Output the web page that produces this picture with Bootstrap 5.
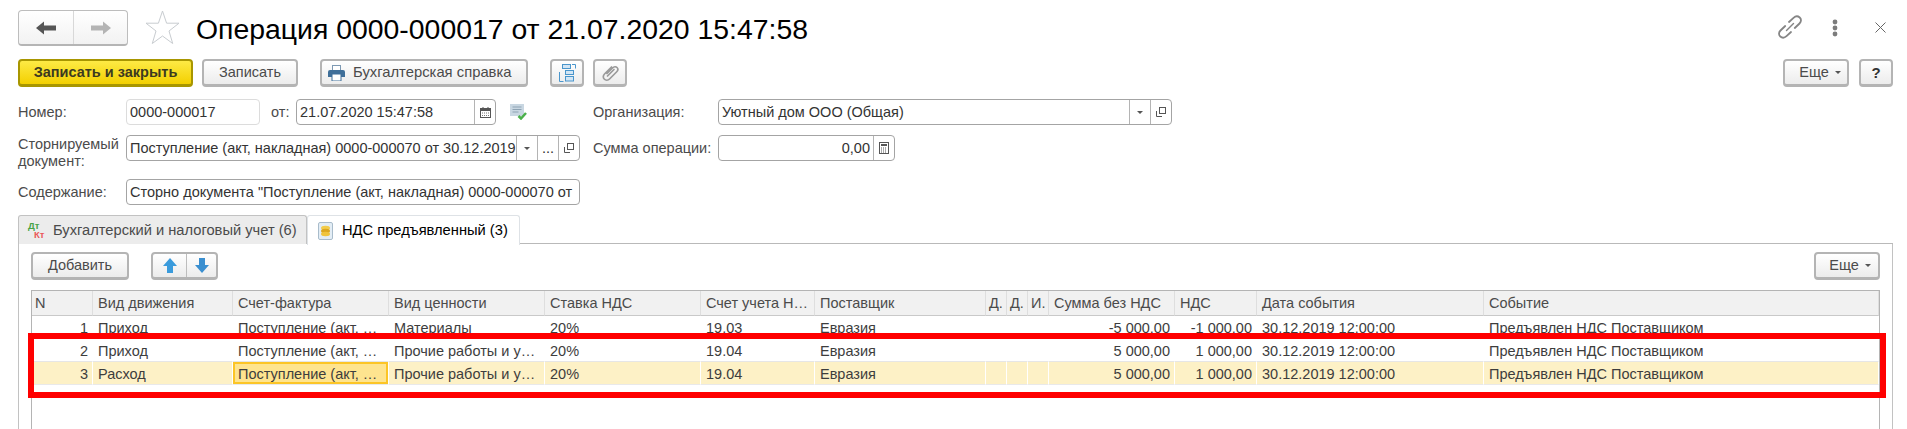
<!DOCTYPE html>
<html lang="ru"><head><meta charset="utf-8"><title>Операция</title>
<link rel="stylesheet" href="https://cdn.jsdelivr.net/npm/bootstrap@5.3.0/dist/css/bootstrap.min.css">
<script src="https://cdn.jsdelivr.net/npm/bootstrap@5.3.0/dist/js/bootstrap.bundle.min.js"></script>
<style>
html,body{height:429px;overflow:hidden;background:#fff}
body{font-family:"Liberation Sans",Arial,sans-serif;font-size:14.5px;color:#4b4b4b;line-height:17px}
.page{position:relative;height:429px;padding:10px 14px 0 18px;overflow:hidden}
.head{height:36px}
.navgroup{width:110px;height:36px;border:1px solid #bdbdbd;border-bottom:2px solid #b5b5b5;border-radius:4px;background:linear-gradient(#fff,#f2f2f2)}
.navgroup>span{display:flex;align-items:center;justify-content:center}
.navgroup>span:first-child{width:55px;border-right:1px solid #d8d8d8}
.navgroup>span:last-child{flex:1}
.star{margin:0 16px 0 17px}
.title{font-size:28.4px;color:#000;line-height:36px;margin-top:1px}
.hicons{width:107px;height:36px;margin-left:auto;position:relative}
.hlink{left:-8px;top:5px}.hdots{left:46px;top:9px}.hx{left:89px;top:12px}
.toolbar{margin-top:13px;height:28px}
.ubtn{--bs-btn-padding-y:0;--bs-btn-padding-x:0;--bs-btn-font-size:14.5px;--bs-btn-line-height:17px;--bs-btn-color:#4b4b4b;--bs-btn-hover-color:#4b4b4b;height:28px;border:2px solid #b4b4b4;border-bottom-width:3px;border-radius:4px;background:linear-gradient(#fff,#ececec);color:#4b4b4b;display:inline-flex;align-items:center;justify-content:center;font-family:inherit}
.ubtn.yl{width:175px;background:linear-gradient(#fdea45,#f3d000);border-color:#a89600;color:#3c3a20;font-weight:700}
.w-zap{width:96px;margin-left:9px}
.ubtn.w-spr{width:208px;margin-left:22px;gap:8px;justify-content:flex-start;padding-left:6px;font-size:14.8px}
.w-ic1{width:34px;margin-left:22px}
.w-ic2{width:34px;margin-left:9px}
.w-more{width:66px;margin-left:auto;gap:6px;padding-left:8px}
.w-q{width:34px;margin-left:10px;font-weight:700;font-size:15px;color:#333}
.caret{width:0;height:0;border:3px solid transparent;border-top:3px solid #555;border-bottom:0}
.frow{display:flex;align-items:flex-start}
.r1{margin-top:12px}.r2{margin-top:10px;height:34px}.r3{margin-top:10px}
.lab{line-height:26px}
.l0{width:108px}
.l2{line-height:17px;margin-top:1px}
.fld{display:flex;height:26px;border:1px solid #a4a4a4;border-radius:4px;background:#fff;color:#333;line-height:24px;padding:0;font-size:14.5px;overflow:hidden}
.fld .val{flex:1;min-width:0;padding:0 3px;white-space:nowrap;overflow:hidden}
.fld .ab{border-left:1px solid #b4b4b4;display:flex;align-items:center;justify-content:center;flex:none;width:21px}
.num{width:134px;border-color:#dcdcdc}
.ot{margin-left:11px;width:25px}
.dt{width:200px}
.note{margin:5px 66px 0 14px}
.lorg{width:125px}
.forg{width:454px}
.flong{width:454px}
.fsum{width:177px;margin-left:0}
.gap13{margin-left:13px}
.r2note{width:125px}
.tabsbar{margin-top:10px;height:29px;border-bottom:1px solid #b9b9b9;--bs-nav-tabs-border-width:0}
.tabsbar .nav-link{height:29px;margin:0;padding:0;border:1px solid #c2c2c2;border-bottom:0;border-radius:3px 3px 0 0;display:flex;align-items:center;color:#4b4b4b;background:#ececec;font-size:14.7px}
.tab1{width:289px;padding-left:9px!important;gap:6px}
.tab2{width:213px;padding-left:10px!important;gap:9px;background:#fff!important;height:30px!important;position:relative;z-index:1}
.dk{display:inline-block;width:19px;height:20px;position:relative;font-size:9.5px;line-height:9px;font-weight:700}
.dk i{font-style:normal;position:absolute}
.dk .d{left:0;top:1px;color:#47a447}.dk .k{left:6px;top:10px;color:#ea5a5a}
.panel{height:185px;border-left:1px solid #c2c2c2;border-right:1px solid #c2c2c2;padding:8px 12px 0 12px}
.ptb{height:28px}
.w-add{width:98px}
.agroup{width:67px;margin-left:22px;padding:0}
.agroup>span{display:flex;align-items:center;justify-content:center;height:100%}
.agroup>span:first-child{width:34px;border-right:1px solid #bdbdbd}
.agroup>span:last-child{flex:1}
.w-more2{width:66px;margin-left:auto;gap:6px;padding-left:6px}
.gridbox{margin-top:10px;height:150px;border:1px solid #b4b4b4;border-bottom:0;border-width:1px 1px 0 1px;overflow:hidden}
.table.utable{table-layout:fixed;width:1847px;margin:0;border-collapse:separate;border-spacing:0;--bs-table-bg:transparent;--bs-table-color:#3d3d3d;color:#3d3d3d}
.table.utable>*>*>*{padding:0 0 0 5px;font-weight:400;font-size:14.5px;white-space:nowrap;overflow:hidden;box-sizing:border-box;height:23px;border-top:0;border-left:0;box-shadow:none}
.table.utable>thead>tr>th{height:25px;line-height:23px;background:#f1f1f1;border-bottom:1px solid #c9c9c9;border-right:1px solid #dedede;color:#4b4b4b}
.table.utable>thead>tr>th.tiny{padding-left:3px}
.table.utable>thead>tr>th.nn{padding-left:3px}
.table.utable>tbody>tr>td{line-height:20px;padding-top:2px;vertical-align:top;border-bottom:1px solid #e6e6e6;border-right:1px solid #fff}
.table.utable>tbody>tr>td.rt{text-align:right;padding:2px 4px 0 0}
.table.utable>tbody>tr.cur>td{background:#fdf1c6;border-bottom-color:#e9e9e9}
.table.utable>tbody>tr.cur>td.sel{background:#fee48f;box-shadow:inset 0 0 0 2px #fcc526}
.redbox{position:absolute;left:28px;top:333px;width:1858px;height:65px;border:6px solid #f00;pointer-events:none}
</style></head>
<body>
<div class="page">
  <div class="head d-flex align-items-start">
    <div class="navgroup d-flex">
      <span><svg width="22" height="16" viewBox="0 0 22 16"><path d="M1 8 9 1.500V5.500H21V10.500H9V14.500Z" fill="#555"/></svg></span>
      <span><svg width="22" height="16" viewBox="0 0 22 16"><path d="M21 8 13 1.500V5.500H1V10.500H13V14.500Z" fill="#b4b4b4"/></svg></span>
    </div>
    <svg class="star" width="35" height="35" viewBox="0 0 35 35"><path d="M17.500 1 21.600 13.200H34L24 21 27.700 33.500 17.500 26 7.300 33.500 11 21 1 13.200H13.400Z" fill="#fff" stroke="#c8ccd0" stroke-width="1"/></svg>
    <div class="title">Операция 0000-000017 от 21.07.2020 15:47:58</div>
    <div class="hicons">
      <svg class="position-absolute hlink" width="24" height="24" viewBox="0 0 24 24" fill="none" stroke="#858585" stroke-width="1.800" stroke-linecap="round"><path d="M11 7 15.500 2.800C17.500 1 20 1 21.700 2.500S23.500 6.500 21.500 8.500L16.800 13"/><path d="M13 17 8.500 21.200C6.500 23 4 23 2.300 21.500S.5 17.500 2.500 15.500L7.200 11"/><path d="M8.500 15.500 15.500 8.500" stroke-width="1.400"/></svg>
      <svg class="position-absolute hdots" width="6" height="18" viewBox="0 0 6 18" fill="#7c7c7c"><circle cx="3" cy="3" r="2.400"/><circle cx="3" cy="9" r="2.400"/><circle cx="3" cy="15" r="2.400"/></svg>
      <svg class="position-absolute hx" width="11" height="11" viewBox="0 0 11 11" stroke="#666" stroke-width="1"><path d="M.5.5 10.500 10.500M10.500.5.500 10.500"/></svg>
    </div>
  </div>
  <div class="toolbar d-flex">
    <button type="button" class="btn ubtn yl">Записать и закрыть</button>
    <button type="button" class="btn ubtn w-zap">Записать</button>
    <button type="button" class="btn ubtn w-spr"><svg width="17" height="16" viewBox="0 0 17 16"><rect x="4" y="0" width="9" height="5" fill="#7d99b3"/><rect x="5" y="1" width="7" height="4" fill="#fff"/><path d="M2 5H15a2 2 0 0 1 2 2V12H0V7A2 2 0 0 1 2 5Z" fill="#3f6f99"/><rect x="4" y="9" width="9" height="7" fill="#fff" stroke="#3f6f99"/></svg>Бухгалтерская справка</button>
    <button type="button" class="btn ubtn w-ic1"><svg width="17" height="18" viewBox="0 0 17 18" fill="#d3e6f5" stroke="#4a96cc"><rect x="3.500" y=".5" width="8" height="4"/><rect x="6.500" y="6.500" width="8" height="4"/><rect x="6.500" y="12.500" width="8" height="4.500"/><path d="M13 .5h3.500v4M.5 8v9.500h4" fill="none"/></svg></button>
    <button type="button" class="btn ubtn w-ic2"><svg width="17" height="17" viewBox="0 0 17 17" fill="none" stroke="#9a9a9a" stroke-width="1.700" stroke-linecap="round"><path d="M5 9.500 10.500 4C12 2.500 14 2.500 15 3.500S16 6.500 14.500 8L7.500 15C6 16.500 3.500 16.300 2.200 15S1 11.500 2.500 10L9.500 3"/><path d="M5.500 12 12 5.500"/></svg></button>
    <button type="button" class="btn ubtn w-more">Еще <span class="caret"></span></button>
    <button type="button" class="btn ubtn w-q">?</button>
  </div>
  <div class="frow r1">
    <div class="lab l0">Номер:</div>
    <div class="fld num"><div class="val">0000-000017</div></div>
    <div class="lab ot">от:</div>
    <div class="fld dt"><div class="val">21.07.2020 15:47:58</div><div class="ab"><svg width="11" height="11" viewBox="0 0 11 11"><rect x=".5" y="1.500" width="10" height="9" fill="#fff" stroke="#555"/><rect x="0" y="1" width="11" height="3" fill="#555"/><rect x="2.500" y="0" width="1" height="2" fill="#555"/><rect x="7.500" y="0" width="1" height="2" fill="#555"/><path d="M2 6h7M2 8.500h7" stroke="#777" stroke-dasharray="1 1"/></svg></div></div>
    <svg class="note" width="17" height="16" viewBox="0 0 17 16"><rect x="0" y="0" width="14" height="12" fill="#c9d7e2"/><path d="M2.500 3h9M2.500 5.500h9M2.500 8h6" stroke="#8ea3b3"/><path d="M8.500 12 11 14.500 16 9" fill="none" stroke="#4bb04b" stroke-width="2.500"/></svg>
    <div class="lab lorg">Организация:</div>
    <div class="fld forg"><div class="val">Уютный дом ООО (Общая)</div><div class="ab"><span class="caret"></span></div><div class="ab"><svg width="10" height="10" viewBox="0 0 10 10" fill="none" stroke="#555"><rect x="3.500" y=".5" width="6" height="6"/><path d="M.5 4v5.500H6"/></svg></div></div>
  </div>
  <div class="frow r2">
    <div class="lab l0 l2">Сторнируемый<br>документ:</div>
    <div class="fld flong"><div class="val">Поступление (акт, накладная) 0000-000070 от 30.12.2019</div><div class="ab"><span class="caret"></span></div><div class="ab"><span>...</span></div><div class="ab"><svg width="10" height="10" viewBox="0 0 10 10" fill="none" stroke="#555"><rect x="3.500" y=".5" width="6" height="6"/><path d="M.5 4v5.500H6"/></svg></div></div>
    <div class="lab r2note gap13">Сумма операции:</div>
    <div class="fld fsum"><div class="val text-end">0,00</div><div class="ab"><svg width="10" height="12" viewBox="0 0 10 12"><rect x=".5" y=".5" width="9" height="11" fill="#fff" stroke="#555"/><rect x="2" y="2" width="6" height="2" fill="#555"/><path d="M2 6h6M2 8h6M2 10h6" stroke="#555" stroke-dasharray="1 1"/></svg></div></div>
  </div>
  <div class="frow r3">
    <div class="lab l0">Содержание:</div>
    <div class="fld flong"><div class="val">Сторно документа "Поступление (акт, накладная) 0000-000070 от</div></div>
  </div>
  <ul class="nav nav-tabs tabsbar">
    <li class="nav-item"><a class="nav-link tab1" href="#"><span class="dk"><i class="d">Дт</i><i class="k">Кт</i></span>Бухгалтерский и налоговый учет (6)</a></li>
    <li class="nav-item"><a class="nav-link tab2 active" href="#"><svg width="15" height="18" viewBox="0 0 15 18"><rect x=".5" y=".5" width="14" height="17" rx="1.500" fill="#e3edf5" stroke="#a9bccb"/><ellipse cx="7.500" cy="6" rx="4.500" ry="2.200" fill="#f2cc4c"/><ellipse cx="7.500" cy="9" rx="4.500" ry="2.200" fill="#dca71f"/><ellipse cx="7.500" cy="12" rx="4.500" ry="2.200" fill="#f0c43c"/></svg>НДС предъявленный (3)</a></li>
  </ul>
  <div class="panel">
    <div class="ptb d-flex">
      <button type="button" class="btn ubtn w-add">Добавить</button>
      <div class="btn ubtn agroup"><span><svg width="14" height="15" viewBox="0 0 14 15"><path d="M7 0 14 8H10V15H4V8H0Z" fill="#3a9bdc"/></svg></span><span><svg width="14" height="15" viewBox="0 0 14 15"><path d="M7 15 14 7H10V0H4V7H0Z" fill="#3a8fd0"/></svg></span></div>
      <button type="button" class="btn ubtn w-more2">Еще <span class="caret"></span></button>
    </div>
    <div class="gridbox">
      <table class="table utable">
        <colgroup><col width="61"><col width="140"><col width="156"><col width="156"><col width="156"><col width="114"><col width="171"><col width="21"><col width="21"><col width="21"><col width="126"><col width="82"><col width="227"><col width="395"></colgroup>
        <thead><tr><th class="nn">N</th><th>Вид движения</th><th>Счет-фактура</th><th>Вид ценности</th><th>Ставка НДС</th><th>Счет учета Н…</th><th>Поставщик</th><th class="tiny">Д.</th><th class="tiny">Д.</th><th class="tiny">И.</th><th>Сумма без НДС</th><th>НДС</th><th>Дата события</th><th>Событие</th></tr></thead>
        <tbody>
          <tr><td class="rt">1</td><td>Приход</td><td>Поступление (акт, …</td><td>Материалы</td><td>20%</td><td>19.03</td><td>Евразия</td><td></td><td></td><td></td><td class="rt">-5 000,00</td><td class="rt">-1 000,00</td><td>30.12.2019 12:00:00</td><td>Предъявлен НДС Поставщиком</td></tr>
          <tr><td class="rt">2</td><td>Приход</td><td>Поступление (акт, …</td><td>Прочие работы и у…</td><td>20%</td><td>19.04</td><td>Евразия</td><td></td><td></td><td></td><td class="rt">5 000,00</td><td class="rt">1 000,00</td><td>30.12.2019 12:00:00</td><td>Предъявлен НДС Поставщиком</td></tr>
          <tr class="cur"><td class="rt">3</td><td>Расход</td><td class="sel">Поступление (акт, …</td><td>Прочие работы и у…</td><td>20%</td><td>19.04</td><td>Евразия</td><td></td><td></td><td></td><td class="rt">5 000,00</td><td class="rt">1 000,00</td><td>30.12.2019 12:00:00</td><td>Предъявлен НДС Поставщиком</td></tr>
        </tbody>
      </table>
    </div>
  </div>
  <div class="redbox"></div>
</div>
</body></html>
